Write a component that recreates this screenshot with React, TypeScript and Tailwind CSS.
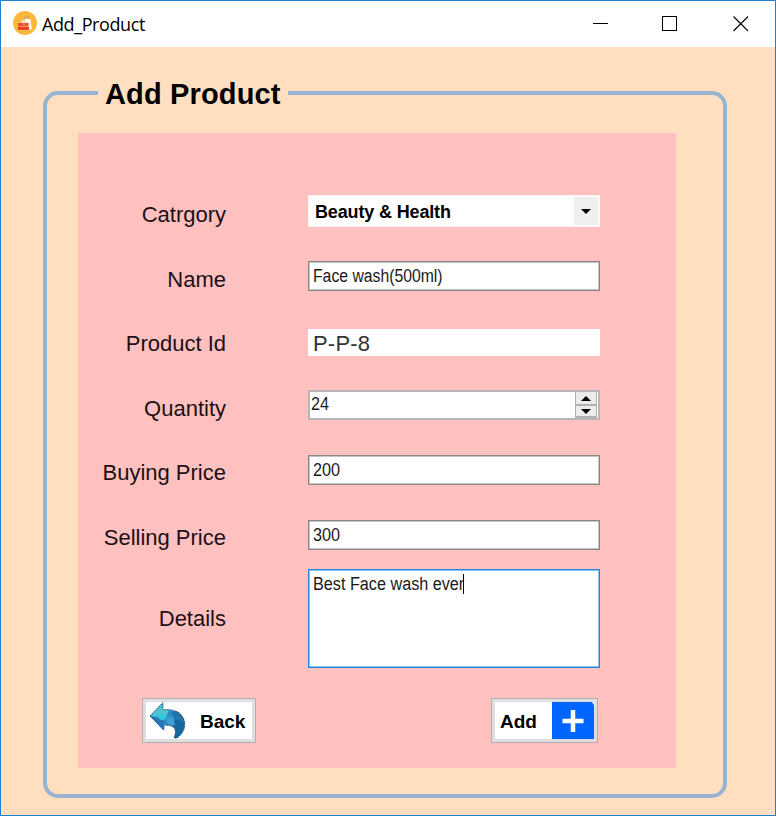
import type { ReactNode } from "react";

function BagIcon() {
  return (
    <svg className="mb-0.5" width="24" height="24" viewBox="0 0 24 24">
      <circle cx="12" cy="12" r="12" fill="#fbb83c" />
      <path d="M11.500 9V6.500a2.500 2.500 0 0 1 4.500 0V9" fill="none" stroke="#b8a06a" strokeWidth="1" />
      <path d="M12 8h5.500l1.500 10.500h-5z" fill="#fff6ea" />
      <path d="M8.500 9.500L12 8v4H8z" fill="#fde3bd" />
      <rect x="5" y="12" width="10.500" height="3.200" fill="#ee4a3c" />
      <rect x="5" y="16" width="11" height="2.800" fill="#e5382f" />
      <rect x="10" y="12.500" width="2" height="2" fill="#fb8a3a" />
      <path d="M4.500 15.600h11.500" stroke="#fba03a" strokeWidth="0.800" />
    </svg>
  );
}

function BackArrowIcon() {
  return (
    <svg className="mb-0.5" width="38" height="38" viewBox="0 0 38 38">
      <path
        d="M1 15 14 1.5V9c9-1.500 17 1.500 20.500 9 3 7 .5 14-6.500 19h-3c3-7 1-12-5-12.500l-5-.5v5z"
        fill="#2c8cc4"
      />
      <path d="M1 15 14 1.500V9l6-.5-3 8z" fill="#52c1d2" />
      <path d="M8 13h7l2 4-5 5z" fill="#32cadd" />
      <path d="M1 15l13 14v-5l2-4z" fill="#2677b8" />
      <path d="M27 10c5 2 8 6 8.500 11L26 18l-4-6z" fill="#2374a8" />
      <path d="M26 18l9.500 3c0 7-3 12-7.500 16h-3c3-6 2-10-1-11.500z" fill="#15669c" />
      <path d="M17 17l7-1 2 8-6 .5z" fill="#3da0d5" />
      <path
        d="M1 15 14 1.500V9c9-1.500 17 1.500 20.500 9 3 7 .5 14-6.500 19h-3c3-7 1-12-5-12.500l-5-.5v5z"
        fill="none"
        stroke="#1d4d7a"
        strokeWidth="1"
        strokeDasharray="1.500 1"
      />
    </svg>
  );
}

function Row({ label, className, labelClass, children }: { label: string; className: string; labelClass: string; children: ReactNode }) {
  return (
    <div className={`flex shrink-0 items-start gap-[82px] ${className}`}>
      <span className={`w-[148px] text-right text-[22px] leading-6 whitespace-nowrap text-[#1c1014] ${labelClass}`}>{label}</span>
      {children}
    </div>
  );
}

function TextBox({ value, className, textClass }: { value: string; className: string; textClass: string }) {
  return (
    <div className={`w-[292px] border border-[#8a8587] bg-white pt-px pl-1 text-[18px] leading-[26px] text-[#1a1a1a] inset-shadow-[0_0_0_1px_#c4c4c4] ${className}`}>
      <span className={`inline-block origin-left whitespace-nowrap ${textClass}`}>{value}</span>
    </div>
  );
}

export default function App() {
  return (
    <div className="flex h-[816px] w-[776px] flex-col overflow-hidden border border-[#1b80d2] bg-[#ffdfc0] font-['Liberation_Sans',Arial,sans-serif]">
      <header className="flex h-[46px] shrink-0 items-center bg-white pl-3">
        <BagIcon />
        <span className="ml-[5px] flex-1 pt-px font-['Open_Sans','Noto_Sans',sans-serif] text-[18px] tracking-[-0.4px] text-black">Add_Product</span>
        <svg className="mr-[25px]" width="157" height="16" viewBox="0 0 157 16" fill="none" stroke="#000" shapeRendering="crispEdges">
          <path d="M0 7.500h15" />
          <rect x="69.500" y="0.500" width="14" height="14" />
          <path d="M140.500 0.500l14.500 14.500M155 0.500l-14.500 14.500" shapeRendering="auto" strokeWidth="1.100" />
        </svg>
      </header>

      <fieldset className="mt-[28px] ml-[42px] h-[723px] w-[684px] rounded-[15px] border-4 border-[#98b3d0]">
        <legend className="ml-[51px] px-[7px] pt-0.5 text-[29px] leading-[34px] font-bold tracking-[0.15px] whitespace-nowrap text-black">Add Product</legend>
        <section className="mt-[22px] ml-[31px] flex h-[635px] w-[598px] flex-col bg-[#ffc0c0] pt-[62px]">
          <Row label="Catrgory" className="h-[66px]" labelClass="mt-2">
            <div className="flex h-8 w-[292px] items-center justify-between border border-[#fff2f2] bg-white pr-px pl-1.5">
              <span className="pt-0.5 text-[18px] font-bold tracking-[-0.15px] text-black">Beauty &amp; Health</span>
              <span className="flex h-7 w-6 items-center justify-center bg-[#efefef]">
                <span className="border-x-[5px] border-t-[5px] border-x-transparent border-t-black" />
              </span>
            </div>
          </Row>
          <Row label="Name" className="h-[68px]" labelClass="mt-[7px]">
            <TextBox value="Face wash(500ml)" className="h-[30px]" textClass="scale-x-[0.875]" />
          </Row>
          <Row label="Product Id" className="h-[61px]" labelClass="mt-[3px]">
            <div className="h-[27px] w-[292px] bg-white pl-[5px] text-[22px] leading-[29px] tracking-[0.2px] text-[#333]">P-P-8</div>
          </Row>
          <Row label="Quantity" className="h-[65px]" labelClass="mt-[7px]">
            <div className="flex h-[30px] w-[292px] justify-between border-2 border-[#b8b4b8] bg-white pr-[1px] pl-px">
              <span className="origin-left scale-x-[0.9] text-[18px] leading-[24px] text-[#1a1a1a]">24</span>
              <span className="flex h-[26px] w-[22px] flex-col border-x border-b-2 border-[#b0b0b0] bg-[#ececec]">
                <span className="flex h-[14px] items-center justify-center border-b-2 border-[#b0b0b0]">
                  <span className="border-x-[5px] border-b-[5px] border-x-transparent border-b-black" />
                </span>
                <span className="flex flex-1 items-center justify-center">
                  <span className="border-x-[5px] border-t-[5px] border-x-transparent border-t-black" />
                </span>
              </span>
            </div>
          </Row>
          <Row label="Buying Price" className="h-[65px]" labelClass="mt-1.5">
            <TextBox value="200" className="h-[30px]" textClass="scale-x-[0.9]" />
          </Row>
          <Row label="Selling Price" className="h-[49px]" labelClass="mt-1.5">
            <TextBox value="300" className="h-[30px]" textClass="scale-x-[0.9]" />
          </Row>
          <Row label="Details" className="h-[129px]" labelClass="mt-[38px]">
            <div className="flex h-[99px] w-[292px] items-start border border-[#1f86dc] bg-white pt-px pl-1 inset-shadow-[0_0_0_1px_#8cc2f0]">
              <span className="w-[150px] origin-left scale-x-[0.9] text-[18px] leading-[26px] whitespace-nowrap text-[#1a1a1a]">Best Face wash ever</span>
              <span className="mt-[3px] h-5 w-px bg-black" />
            </div>
          </Row>
          <div className="flex justify-between pr-[78px] pl-16">
            <button className="flex h-[45px] w-[114px] items-center border border-[#b3b0b1] bg-[#dedede] p-[3px]">
              <span className="flex h-full w-full items-center bg-white pl-[3px]">
                <BackArrowIcon />
                <span className="ml-[13px] pt-1 text-[19px] font-bold text-black">Back</span>
              </span>
            </button>
            <button className="flex h-[45px] w-[107px] items-center border border-[#b3b0b1] bg-[#dedede] p-[3px]">
              <span className="flex h-full w-full items-center justify-between bg-white pl-[5px]">
                <span className="pt-1 text-[19px] font-bold text-black">Add</span>
                <svg width="42" height="37" viewBox="0 0 42 37">
                  <path d="M0 0h40l2 3v34H0z" fill="#0066ff" />
                  <path d="M10.500 19h21M21 8v22" stroke="#fff" strokeWidth="4.500" />
                </svg>
              </span>
            </button>
          </div>
        </section>
      </fieldset>
    </div>
  );
}
